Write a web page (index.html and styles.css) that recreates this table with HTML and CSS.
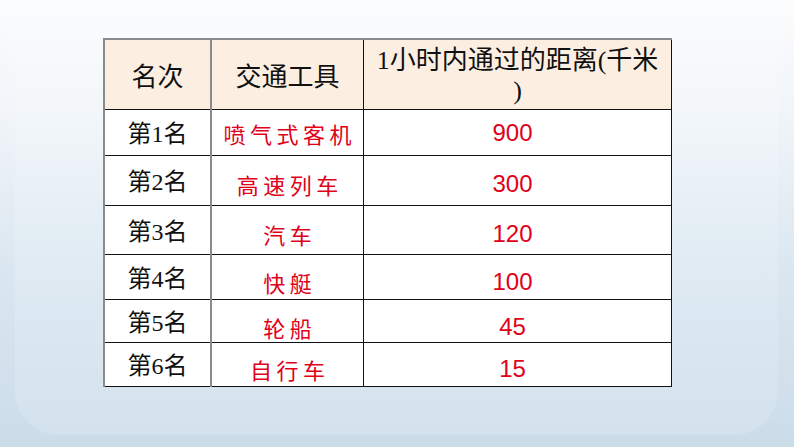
FILE: index.html
```html
<!DOCTYPE html>
<html lang="zh">
<head>
<meta charset="utf-8">
<link rel="stylesheet" href="styles.css">
</head>
<body>
<div class="panel">
  <table class="rank">
    <tr class="head">
      <th class="c1">名次</th>
      <th class="c2">交通工具</th>
      <th class="c3">1小时内通过的距离(千米<br>)</th>
    </tr>
    <tr class="r1"><td class="c1">第1名</td><td class="c2 red">喷气式客机</td><td class="c3 num">900</td></tr>
    <tr class="r2"><td class="c1">第2名</td><td class="c2 red">高速列车</td><td class="c3 num">300</td></tr>
    <tr class="r3"><td class="c1">第3名</td><td class="c2 red">汽车</td><td class="c3 num">120</td></tr>
    <tr class="r4"><td class="c1">第4名</td><td class="c2 red">快艇</td><td class="c3 num">100</td></tr>
    <tr class="r5"><td class="c1">第5名</td><td class="c2 red">轮船</td><td class="c3 num">45</td></tr>
    <tr class="r6"><td class="c1">第6名</td><td class="c2 red">自行车</td><td class="c3 num">15</td></tr>
  </table>
</div>
</body>
</html>
```
FILE: styles.css
```css
html, body {
  margin: 0;
  padding: 0;
}
body {
  width: 794px;
  height: 447px;
  overflow: hidden;
  background: linear-gradient(to bottom, #fbfcfd 0%, #f1f5f9 25%, #dbe7f0 60%, #cbdce9 100%);
}
.panel {
  margin: 0 16px 0 15px;
  height: 435px;
  border-radius: 0 0 44px 44px;
  background: linear-gradient(to bottom, #fbfcfd 0%, #f3f7fa 25%, #e0ebf3 60%, #d3e2ed 100%);
  padding-top: 38px;
  box-sizing: border-box;
  overflow: hidden;
}
.rank {
  margin-left: 88px;
  border-collapse: collapse;
  table-layout: fixed;
  width: 569px;
  font-family: "Liberation Serif", "Noto Sans CJK SC", serif;
  color: #111;
}
.rank th, .rank td {
  border: 1.5px solid #111;
  padding: 0;
  text-align: center;
  vertical-align: middle;
  background: #fff;
  white-space: nowrap;
}
.rank .c1 { width: 105px; border-left: 2px solid #8a8a8a; border-right: 2px solid #8a8a8a; }
.rank .c2 { width: 151px; }
.rank .c3 { width: 307px; }
.rank .head th {
  background: #fcefe2;
  font-weight: normal;
  font-size: 26px;
  line-height: 30px;
  border-top: 2px solid #8a8a8a;
}
.rank .head th.c1, .rank .head th.c2 { padding-top: 8px; }
.rank .head th.c3 { padding-top: 4px; }
.rank td.c1 {
  font-size: 24px;
  line-height: 28px;
  padding-top: 4px;
}
.red {
  color: #e0001a;
  font-family: "Noto Sans CJK SC", sans-serif;
  font-size: 22px;
  line-height: 26px;
  letter-spacing: 4.5px;
  text-indent: 4.5px;
}
.num {
  color: #e0001a;
  font-family: "Liberation Sans", Arial, sans-serif;
  font-size: 24px;
  line-height: 26px;
  padding-right: 10px !important;
}
.head { height: 70px; }
.r1 { height: 46px; }
.r2 { height: 50px; }
.r3 { height: 49px; }
.r4 { height: 45px; }
.r5 { height: 43px; }
.r6 { height: 44px; }
.r1 .num, .r1 .red { padding-top: 1px; }
.r2 .num, .r2 .red { padding-top: 8px; }
.r3 .num, .r3 .red { padding-top: 8px; }
.r4 .num, .r4 .red { padding-top: 11px; }
.r5 .num, .r5 .red { padding-top: 13px; }
.r6 .num, .r6 .red { padding-top: 10px; }
```
